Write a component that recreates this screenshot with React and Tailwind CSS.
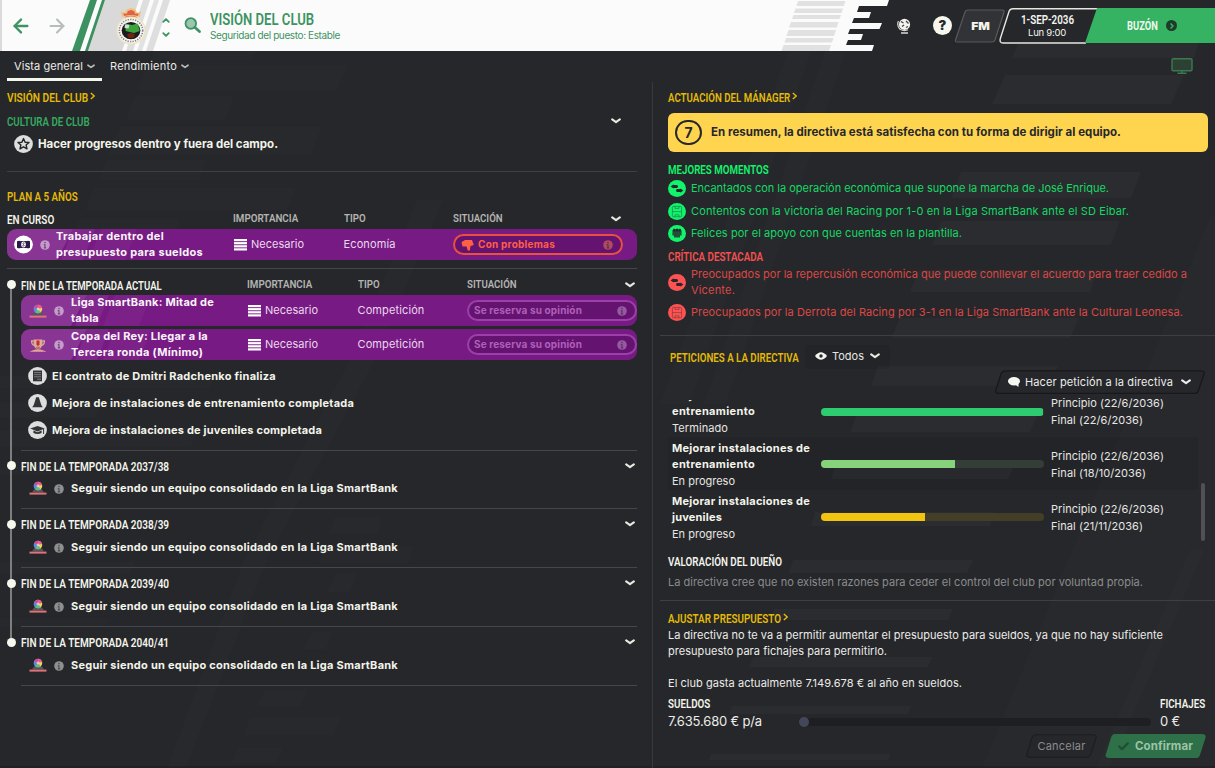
import React, { useLayoutEffect, useRef, useState } from "react";
import { ArrowLeft, ArrowRight, ChevronDown, ChevronRight, ChevronUp, Check } from "lucide-react";

/* Text set to a fixed measure: letter spacing absorbs the difference. */
function Fit({ w, className = "", children }) {
  const ref = useRef(null);
  const [ls, setLs] = useState(0);
  useLayoutEffect(() => {
    const natural = ref.current.getBoundingClientRect().width;
    setLs((w - natural) / String(children).length);
  }, [w, children]);
  return (
    <span ref={ref} className={"inline-block whitespace-pre " + className} style={{ letterSpacing: ls + "px" }}>
      {children}
    </span>
  );
}

/* Condensed display face: glyphs are narrowed to the given measure. */
function Cond({ w, className = "", children }) {
  const ref = useRef(null);
  const [s, setS] = useState(1);
  useLayoutEffect(() => {
    setS(w / ref.current.offsetWidth);
  }, [w, children]);
  return (
    <span className="flex shrink-0" style={{ width: w }}>
      <span
        ref={ref}
        className={"block shrink-0 origin-left whitespace-pre font-[Roboto,sans-serif] " + className}
        style={{ transform: "scaleX(" + s + ")" }}
      >
        {children}
      </span>
    </span>
  );
}

const H = "-translate-y-[0.5px] text-[13.5px] leading-4 font-semibold";

function Chev({ className = "", small }) {
  return (
    <svg viewBox="0 0 10 6" className={(small ? "h-[5px] w-[8px] shrink-0 " : "h-[6px] w-[10px] shrink-0 ") + className}>
      <path d="M1.200 1.400L5 4.100L8.800 1.400" fill="none" stroke="currentColor" strokeWidth="2.100" strokeLinecap="round" strokeLinejoin="round" />
    </svg>
  );
}

function Info({ className = "" }) {
  return (
    <svg viewBox="0 0 10 10" className={"h-[10px] w-[10px] shrink-0 " + className}>
      <circle cx="5" cy="5" r="4.800" fill="currentColor" />
      <path d="M5 4.300V8M3.800 4.600H5M3.800 7.800H6.200" stroke="#26272b" strokeOpacity=".6" strokeWidth="1.200" />
      <circle cx="5" cy="2.600" r=".8" fill="#26272b" fillOpacity=".6" />
    </svg>
  );
}

function Bars() {
  return (
    <svg viewBox="0 0 13 12" className="h-[12px] w-[13px] shrink-0">
      {[0, 3.1, 6.2, 9.3].map((y) => (
        <rect key={y} x="0" y={y} width="13" height="2.2" fill="#fff" />
      ))}
    </svg>
  );
}

function League() {
  return (
    <svg viewBox="0 0 18 16" className="h-[16px] w-[18px] shrink-0">
      <path d="M3 12.600Q6 7 9 9Q12 7 15 12.600Z" fill="#5a5658" />
      <circle cx="9" cy="6" r="4.200" fill="#b9a8b8" />
      <path d="M9 6V1.800A4.200 4.200 0 0 1 13 5Z" fill="#f0568e" />
      <path d="M9 6L13.100 5A4.200 4.200 0 0 1 11.500 9.400Z" fill="#f4d24c" />
      <path d="M9 6L11.500 9.400A4.200 4.200 0 0 1 6.300 9.200Z" fill="#5bbf7e" />
      <path d="M9 6L6.300 9.200A4.200 4.200 0 0 1 5.200 4.300Z" fill="#4e8ede" />
      <path d="M9 6L5.200 4.300A4.200 4.200 0 0 1 9 1.800Z" fill="#d0459a" />
      <circle cx="9" cy="6" r="1.400" fill="#e9e2ea" fillOpacity=".7" />
      <rect x="0.5" y="12.600" width="17" height="2" fill="#e2727a" />
    </svg>
  );
}

function Cup() {
  return (
    <svg viewBox="0 0 18 16" className="h-[16px] w-[18px] shrink-0">
      <path d="M4.500 2.500H13.500V7A4.500 4.500 0 0 1 4.500 7Z" fill="#dcae94" />
      <path d="M4.500 4H2.600Q2.600 8 5.600 8.400M13.500 4H15.400Q15.400 8 12.400 8.400" fill="none" stroke="#dcae94" strokeWidth="1.300" />
      <path d="M7.500 3.500H10.500V8Q9 9.400 7.500 8Z" fill="#c8273c" />
      <path d="M7.600 9.500H10.400L12 12.600H6Z" fill="#b07868" />
      <path d="M0.500 14.800Q9 9.800 17.500 14.800Z" fill="#e6a49c" />
    </svg>
  );
}

function Money() {
  return (
    <svg viewBox="0 0 19 19" className="h-[19px] w-[19px] shrink-0">
      <ellipse cx="9.500" cy="9.500" rx="9.400" ry="8.900" fill="#fff" />
      <path d="M3 6.200Q5 5.200 7 6.200V12.800Q5 13.800 3 12.800ZM16 6.200Q14 5.200 12 6.200V12.800Q14 13.800 16 12.800Z" fill="#2c1b46" />
      <path d="M6.500 5.900H12.500V13.100H6.500Z" fill="#2c1b46" />
      <ellipse cx="9.500" cy="9.500" rx="2.300" ry="2.900" fill="#fff" />
      <path d="M10.700 8.200Q9.700 7.400 9 8.200Q8.600 9.100 9.500 9.500Q10.500 9.900 10.100 10.700Q9.300 11.400 8.300 10.700" stroke="#2c1b46" strokeWidth=".8" fill="none" />
    </svg>
  );
}

function StarIcon() {
  return (
    <svg viewBox="0 0 19 18" className="h-[18px] w-[19px] shrink-0">
      <ellipse cx="9.500" cy="9" rx="9.400" ry="8.900" fill="#dededf" />
      <path d="M9.500 3.600L11.100 7.200L15 7.500L12.100 10L13 13.900L9.500 11.800L6 13.900L6.900 10L4 7.500L7.900 7.200Z" fill="none" stroke="#26272b" strokeWidth="1.400" strokeLinejoin="round" />
    </svg>
  );
}

function GreyIcon({ kind }) {
  return (
    <svg viewBox="0 0 19 18" className="-mt-px h-[18px] w-[19px] shrink-0">
      <ellipse cx="9.500" cy="9" rx="9.400" ry="8.900" fill="#dededf" />
      {kind === "doc" && (
        <g>
          <path d="M5 3.500H14V14.300H5Z" fill="#333438" />
          <path d="M6 5.600H13M6 7.700H13M6 9.800H13M9 12.200H13" stroke="#8f8f91" strokeWidth=".8" />
        </g>
      )}
      {kind === "cone" && (
        <g fill="#333438">
          <path d="M8.200 3.200H10.800L13.400 11.500H5.600Z" />
          <path d="M4.200 13.200L6 10.800H13L14.800 13.200Z" />
        </g>
      )}
      {kind === "cap" && (
        <g fill="#333438">
          <path d="M2.200 7.600L9.500 5L16.800 7.600L9.500 10.400Z" />
          <path d="M5.400 9.600V12Q9.500 14.200 13.600 12V9.600L9.500 11.200Z" />
          <path d="M15.600 8V13" stroke="#333438" strokeWidth="1" />
        </g>
      )}
    </svg>
  );
}

function NewsIcon({ kind, className }) {
  return (
    <svg viewBox="0 0 18 17" className={"h-[17px] w-[18px] shrink-0 " + className}>
      <ellipse cx="9" cy="8.500" rx="9" ry="8.500" fill="currentColor" />
      {kind === "swap" && (
        <g fill="#26272b">
          <path d="M2.600 6.400L5.600 4.300V5H8.800Q10 5.300 10 6.500Q10 7.800 8.800 8H5.600V8.600Z" />
          <path d="M15.400 10.600L12.400 12.700V12H9.200Q8 11.700 8 10.500Q8 9.200 9.200 9H12.400V8.400Z" />
        </g>
      )}
      {kind === "pitch" && (
        <g fill="none" stroke="#26272b" strokeOpacity=".42" strokeWidth=".9">
          <rect x="4.400" y="3.400" width="9.200" height="10.400" rx="1" />
          <path d="M4.400 8.600H13.600M7 3.400V5.400H11V3.400M7 13.800V11.800H11V13.800" />
        </g>
      )}
      {kind === "squad" && (
        <g fill="#26272b">
          <path d="M4.400 5.400H13.600V10.600H12V12.400H6V10.600H4.400Z" fillOpacity=".8" />
          <circle cx="6.300" cy="5.200" r="1.400" />
          <circle cx="9" cy="4.900" r="1.500" />
          <circle cx="11.700" cy="5.200" r="1.400" />
        </g>
      )}
    </svg>
  );
}

function Crest() {
  return (
    <svg viewBox="0 0 30 38" className="h-[38px] w-[30px]">
      <path d="M6 10L5 4.500L9 6L10.500 2.500L15 1L19.500 2.500L21 6L25 4.500L24 10Q15 7.500 6 10Z" fill="#efc27a" />
      <path d="M8 9L7.600 6L10.500 7L12 4L15 3L18 4L19.500 7L22.400 6L22 9Q15 7 8 9Z" fill="#e2604a" />
      <path d="M9 10.500Q15 8.500 21 10.500" stroke="#e07a3c" strokeWidth="1.400" fill="none" />
      <ellipse cx="15" cy="23.500" rx="14.600" ry="14" fill="#efe2bd" />
      <ellipse cx="15" cy="23.500" rx="13.400" ry="12.800" fill="#f8f6f2" />
      <ellipse cx="15" cy="23.500" rx="11.700" ry="11.100" fill="none" stroke="#85828a" strokeWidth="1.600" strokeDasharray="1.300 1.200" />
      <ellipse cx="15" cy="23.600" rx="9.400" ry="8.600" fill="#1c1a1a" />
      <path d="M9.500 16.500L16 18L21.500 16.400L23.800 24L18 26L9.600 24Z" fill="#3aa53c" />
      <path d="M9 17.500L13.500 18L12.500 21.500L8.500 21Z" fill="#d5ddd6" />
      <path d="M11 27.500Q15 24.500 19 27.500L18 30.500Q15 31.800 12 30.500Z" fill="#6e2215" />
    </svg>
  );
}

function Backdrop() {
  const right = [
    "1020,38 1200,38 1194,58 1012,58", "1005,75 1184,75 1171,104 992,104", "961,172 1141,172 1131,198 951,198",
    "941,221 1120,221 1111,245 932,245", "919,270 1098,270 1090,292 910,292", "900,318 1079,318 1070,338 891,338",
    "878,366 1058,366 1050,386 871,386", "857,414 1038,414 1030,432 850,432", "836,463 1016,463 1008,479 831,479",
    "815,512 994,512 990,526 811,526", "793,560 973,560 967,573 789,573", "774,609 953,609 948,620 770,620",
    "753,657 932,657 928,667 749,667", "732,706 911,706 908,714 729,714", "711,754 891,754 888,760 709,760",
  ];
  const left = [
    "155,51 258,51 249,60 151,60", "147,65 348,65 337,90 138,90", "135,96 234,96 225,120 126,120",
    "120,127 322,127 311,155 108,155", "107,160 206,160 199,180 99,180", "94,188 296,188 287,210 85,210",
    "80,219 180,219 172,240 70,240", "0,376 215,376 209,388 0,388", "0,403 101,403 96,417 0,417", "0,431 197,431 191,447 0,447",
    "0,467 78,467 73,475 0,475", "335,517 382,517 377,534 329,534", "325,546 413,546 408,563 318,563",
    "336,574 357,574 350,592 326,592", "312,632 333,632 326,649 303,649", "266,690 307,690 301,706 257,706",
    "250,718 341,718 334,735 243,735", "238,748 283,748 276,763 232,763", "0,562 135,562 130,574 0,574", "0,619 110,619 105,626 0,626",
  ];
  return (
    <svg viewBox="0 0 1215 768" className="absolute inset-0 h-[768px] w-[1215px]">
      <g fill="#fff" fillOpacity=".024">
        {right.map((p) => (
          <polygon key={p} points={p} />
        ))}
      </g>
      <g fill="#fff" fillOpacity=".012">
        {left.map((p) => (
          <polygon key={p} points={p} />
        ))}
        <polygon points="788,51 811,51 690,404 660,404" />
        <polygon points="825,51 846,51 726,404 704,404" />
        <polygon points="1211,215 1215,215 1215,768 982,768" />
        <polygon points="1190,550 1204,550 1110,768 1096,768" />
        <polygon points="417,200 443,200 375,360 267,560 186,768 167,768 244,560 350,360" />
      </g>
      <rect x="0" y="766" width="1215" height="2" fill="#18181b" fillOpacity=".35" />
    </svg>
  );
}

function HeaderArt() {
  return (
    <svg viewBox="0 0 900 51" className="absolute top-0 left-0 h-[51px] w-[900px]">
      <path d="M0 0H889L887 6H859L857 12H871L869 18H854L852 23H882L879.500 29H850L848 34H863L861 40H848L846 45H874L872 51H0Z" fill="#fbfbfb" />
      <rect x="0" y="0" width="2" height="51" fill="#dadada" />
      <polygon points="105,0 139,0 122,51 88,51" fill="#d9d9d9" />
      <polygon points="143,0 150,0 133,51 126,51" fill="#dedede" />
      <polygon points="154,0 159,0 142,51 137,51" fill="#e2e2e2" />
      <polygon points="163,0 170,0 153,51 146,51" fill="#dedede" />
      <polygon points="90,0 97,0 80,51 72,51" fill="#3d9160" />
      <polygon points="102,0 105,0 88,51 85,51" fill="#3d9160" />
      <g fill="#e1e1e1">
        <polygon points="798,1 845.500,1 843.800,6 796.500,6" />
        <polygon points="795.500,8.500 843,8.500 841.500,13 794,13" />
        <polygon points="793.500,15 841,15 839.500,19 792,19" />
        <polygon points="791,22 838.500,22 836.700,27.500 789,27.500" />
        <polygon points="788.500,30 836,30 834,36 786.500,36" />
        <polygon points="786,38 833.500,38 832,42.500 784.500,42.500" />
        <polygon points="783.500,45 831,45 829,51 781.500,51" />
      </g>
    </svg>
  );
}

function Header() {
  return (
    <header className="relative h-[51px] w-full shrink-0">
      <HeaderArt />
      <div className="relative flex h-full items-center">
        <ArrowLeft className="ml-[10px] h-[22px] w-[22px] text-[#3d9463]" strokeWidth={2.5} />
        <ArrowRight className="ml-[14px] h-[22px] w-[22px] text-[#b9bdb9]" strokeWidth={2.3} />
        <div className="ml-[48px] pt-px">
          <Crest />
        </div>
        <div className="ml-[13px] flex flex-col gap-[3px] pt-[3px] text-[#3d9463]">
          <ChevronUp className="h-[11px] w-[14px]" strokeWidth={4} />
          <ChevronDown className="h-[11px] w-[14px]" strokeWidth={4} />
        </div>
        <svg viewBox="0 0 18 17" className="ml-[11px] h-[17px] w-[18px]">
          <circle cx="6.800" cy="6.500" r="5.300" fill="#9cc5ae" stroke="#3d9463" strokeWidth="1.800" />
          <path d="M11 10.500L15.500 14.500" stroke="#3d9463" strokeWidth="2.800" strokeLinecap="round" />
        </svg>
        <div className="ml-[8px] flex flex-col text-[#3d9463]">
          <Cond w={104} className="text-[17px] leading-[18px] font-semibold">VISIÓN DEL CLUB</Cond>
          <Fit w={130} className="text-[10px] leading-[14px]">Seguridad del puesto: Estable</Fit>
        </div>
        <div className="ml-auto flex items-center">
          <svg viewBox="0 0 16 16" className="mr-[21px] h-[16px] w-[16px]">
            <circle cx="8.500" cy="6.400" r="5.600" fill="#f4f4ec" />
            <path d="M5 3.500L7.500 5M6 8.500L8 7M10 3L12.500 5.500M10 9.500L12 8.500" stroke="#44454a" strokeWidth="1.300" fill="none" />
            <path d="M2.400 3Q.500 8 4 11.200Q8 13.500 12 11.800" stroke="#d8d8d2" strokeWidth="1.200" fill="none" />
            <path d="M5 15H12" stroke="#f4f4ec" strokeWidth="1.300" />
          </svg>
          <div className="flex h-[19px] w-[19px] items-center justify-center rounded-full bg-[#f6f8ee] text-[13px] font-black text-[#26272b]">?</div>
          <div className="relative ml-[2px] flex h-[34px] w-[52px] items-center justify-center">
            <svg viewBox="0 0 52 34" className="absolute inset-0 h-[34px] w-[52px]">
              <path d="M14 1H48Q50.500 1 50 3L41 31Q40.200 33 38 33H3Q1 33 1.500 31L11 3Q11.800 1 14 1Z" fill="#323337" stroke="#58595d" strokeWidth="1.200" />
            </svg>
            <span className="relative scale-x-110 pt-px text-[11px] leading-4 font-black text-[#f4f4ec]">FM</span>
          </div>
          <div className="relative -ml-[7px] flex h-[36px] w-[216px]">
            <svg viewBox="0 0 216 36" className="absolute inset-0 h-[36px] w-[216px]">
              <path d="M98 .800H14Q11 .800 10 3.500L1.500 30Q0 35 4 35H87" fill="#26272b" stroke="#e6e6e0" strokeWidth="1.400" />
              <path d="M98 0H216V35H86Z" fill="#35b262" />
            </svg>
            <div className="relative flex w-[96px] flex-col items-center pt-[4px] text-[#f4f5ee]">
              <Cond w={53} className="text-[13.5px] leading-[15px] font-semibold">1-SEP-2036</Cond>
              <Fit w={38} className="text-[9.5px] leading-[12px]">Lun 9:00</Fit>
            </div>
            <div className="relative flex flex-1 items-center gap-[8px] pl-[32px] text-[#eef8ee]">
              <Cond w={31} className="text-[13px] leading-[16px] font-bold">BUZÓN</Cond>
              <div className="flex h-[11px] w-[11px] items-center justify-center rounded-full bg-[#1e3b2a] text-[#35b262]">
                <ChevronRight className="h-[8px] w-[8px]" strokeWidth={5} />
              </div>
            </div>
          </div>
        </div>
      </div>
    </header>
  );
}

function Tabs() {
  return (
    <nav className="flex h-[31px] shrink-0 items-start pl-[7px] text-[11px] text-[#ecece8]">
      <div className="flex h-[30px] w-[95px] items-center gap-[4px] border-b-[3px] border-[#f4f7ec] pl-[7px] pt-[3px]">
        <Fit w={69}>Vista general</Fit>
        <Chev small className="mt-px text-[#b9b9b7]" />
      </div>
      <div className="flex h-[30px] items-center gap-[4px] pl-[8px]">
        <Fit w={67}>Rendimiento</Fit>
        <Chev small className="mt-px text-[#b9b9b7]" />
      </div>
      <svg viewBox="0 0 22 18" className="mt-[6px] mr-[22px] ml-auto h-[18px] w-[22px]">
        <rect x="1" y="1.800" width="20" height="12" rx="1.200" fill="#2c4034" stroke="#3a7a50" strokeWidth="1.400" />
        <path d="M6.500 16.300H15.500M11 14V16" stroke="#3a7a50" strokeWidth="1.400" />
      </svg>
    </nav>
  );
}

function Heading({ w, children, arrow, className = "" }) {
  return (
    <div className={"flex items-center gap-[2px] text-[#e3bb07] " + className}>
      <Cond w={w} className={H}>{children}</Cond>
      {arrow && (
        <svg viewBox="0 0 6 9" className="-mt-[2px] h-[8px] w-[5px]">
          <path d="M1 1L5 4.500L1 8" fill="none" stroke="currentColor" strokeWidth="1.700" />
        </svg>
      )}
    </div>
  );
}

function PlanHeader({ title, w, cols }) {
  return (
    <div className="flex h-full items-center pr-[2px]">
      <Cond w={w} className={H + " text-[#f3f4ea]"}>{title}</Cond>
      {cols && (
        <div className="ml-auto flex text-[#b4b4b2]">
          <div className="w-[110.500px]"><Cond w={65} className="text-[11px] leading-4 font-semibold">IMPORTANCIA</Cond></div>
          <div className="w-[109.500px]"><Cond w={22} className="text-[11px] leading-4 font-semibold">TIPO</Cond></div>
          <div className="w-[158px]"><Cond w={50} className="text-[11px] leading-4 font-semibold">SITUACIÓN</Cond></div>
        </div>
      )}
      <Chev className={cols ? "text-[#e8e9df]" : "ml-auto text-[#e8e9df]"} />
    </div>
  );
}

function Goal({ icon, lines, type, typeW, status, bad }) {
  return (
    <div className="relative flex h-[31px] items-center overflow-hidden rounded-[9px] bg-[#781a84] text-white">
      <svg viewBox="0 0 200 31" className="absolute top-0 left-0 h-[31px] w-[200px]">
        <polygon points="0,0 66,0 50,31 0,31" fill="#fff" fillOpacity=".12" />
        <polygon points="66,0 88,0 76,31 54,31" fill="#fff" fillOpacity=".06" />
        <polygon points="94,0 130,0 118,31 82,31" fill="#fff" fillOpacity=".03" />
      </svg>
      <div className="relative ml-[7px] flex w-[19px] justify-center">{icon}</div>
      <Info className="relative ml-[7px] text-[#c79acd]" />
      <div
        className={
          "relative -mt-[2px] flex flex-col text-[11px] leading-4 font-bold text-[#fbf4fb] " +
          (bad ? "ml-[6px] w-[178px]" : "ml-[7px] w-[177px]")
        }
      >
        {lines.map(([t, w]) => (
          <Fit key={t} w={w} className="self-start">{t}</Fit>
        ))}
      </div>
      <div className="relative flex w-[109.500px] items-center gap-[4px] text-[11px] text-[#ead9ec]">
        <Bars />
        <Fit w={53}>Necesario</Fit>
      </div>
      <div className="relative w-[109.500px] text-[11px] text-[#ead9ec]">
        <Fit w={typeW}>{type}</Fit>
      </div>
      <div
        className={
          "relative flex h-[21px] w-[170px] shrink-0 items-center rounded-full border-2 bg-[#651370] text-[10px] font-bold " +
          (bad ? "border-[#e8503f] pl-[6px] text-[#ff5f45]" : "border-[#9a40a8] pl-[5px] text-[#b060bb]")
        }
      >
        {bad && (
          <svg viewBox="0 0 13 12" className="mr-[4px] h-[12px] w-[13px]">
            <path d="M.5 3L3.500 1.500V1H11L12.800 6L9.500 7L8.800 11.500H6.800L5.600 7.500H1.500Z" fill="currentColor" />
          </svg>
        )}
        <Fit w={bad ? 77 : 108}>{status}</Fit>
        <Info className={bad ? "mr-[8px] ml-auto text-[#b04a60]" : "mr-[8px] ml-auto text-[#9a58a4]"} />
      </div>
    </div>
  );
}

const SEASONS = ["2037/38", "2038/39", "2039/40", "2040/41"];
const DOTS = ["top-[11px]", "top-[192px]", "top-[251px]", "top-[310px]", "top-[369px]"];
const EVENTS = [
  ["doc", "El contrato de Dmitri Radchenko finaliza", 224],
  ["cone", "Mejora de instalaciones de entrenamiento completada", 302],
  ["cap", "Mejora de instalaciones de juveniles completada", 270],
];

function Timeline() {
  return (
    <div className="relative h-[418px] pl-[14px]">
      <div className="absolute top-[15px] left-[3px] h-[359px] w-[2px] bg-[#7d7e7e]" />
      {DOTS.map((d) => (
        <span key={d} className={"absolute left-0 h-[9px] w-[9px] rounded-full bg-[#f6f8ee] " + d} />
      ))}
      <div className="h-[31px] w-full">
        <PlanHeader title="FIN DE LA TEMPORADA ACTUAL" w={141} cols />
      </div>
      <div className="-mt-[5px] flex flex-col gap-[3px]">
        <Goal icon={<League />} lines={[["Liga SmartBank: Mitad de", 143], ["tabla", 28]]} type="Competición" typeW={67} status="Se reserva su opinión" />
        <Goal icon={<Cup />} lines={[["Copa del Rey: Llegar a la", 137], ["Tercera ronda (Mínimo)", 132]]} type="Competición" typeW={67} status="Se reserva su opinión" />
      </div>
      <div className="flex h-[91px] flex-col border-b border-[#46474a] pt-[3px] pl-[7px] text-[11px] font-bold text-[#f3f4ea]">
        {EVENTS.map(([k, t, w]) => (
          <div key={k} className="flex h-[27px] items-center gap-[5px]">
            <GreyIcon kind={k} />
            <Fit w={w}>{t}</Fit>
          </div>
        ))}
      </div>
      {SEASONS.map((s, i) => (
        <div key={s} className={(i === 0 ? "h-[58px]" : "h-[59px]") + " border-b border-[#46474a]"}>
          <div className={i === 0 ? "h-[28px] pt-px" : "h-[29px] pt-px"}>
            <PlanHeader title={"FIN DE LA TEMPORADA " + s} w={148} />
          </div>
          <div className="flex h-[18px] items-center pl-[8px] text-[11px] font-bold text-[#f3f4ea]">
            <League />
            <Info className="mt-px ml-[7px] text-[#8f8f8f]" />
            <Fit w={327} className="ml-[7px]">Seguir siendo un equipo consolidado en la Liga SmartBank</Fit>
          </div>
        </div>
      ))}
    </div>
  );
}

function LeftPane() {
  return (
    <section className="flex w-[652px] shrink-0 flex-col pr-[15px] pl-[7px]">
      <Heading w={81} arrow className="mt-[3px] h-[24px]">VISIÓN DEL CLUB</Heading>
      <div className="flex h-[24px] items-center justify-between pr-[16px] text-[#35aa60]">
        <Cond w={83} className={H}>CULTURA DE CLUB</Cond>
        <Chev className="text-[#e8e9df]" />
      </div>
      <div className="flex h-[39px] items-start gap-[5px] border-b border-[#3e3f42] pt-[2px] pl-[7px] text-[11.5px] font-bold text-[#f3f4ea]">
        <StarIcon />
        <Fit w={240} className="leading-[18px]">Hacer progresos dentro y fuera del campo.</Fit>
      </div>
      <Heading w={71} className="mt-[12px] h-[24px]">PLAN A 5 AÑOS</Heading>
      <div className="h-[21px] pr-[14px]">
        <PlanHeader title="EN CURSO" w={47} cols />
      </div>
      <div className="border-b border-[#46474a] pb-[8px]">
        <Goal icon={<Money />} lines={[["Trabajar dentro del", 108], ["presupuesto para sueldos", 147]]} type="Economía" typeW={52} status="Con problemas" bad />
      </div>
      <Timeline />
    </section>
  );
}

function News({ kind, lines, className, color }) {
  return (
    <div className={"flex items-center gap-[5px] " + className}>
      <NewsIcon kind={kind} className={color} />
      <div className="flex flex-col">
        {lines.map(([t, w]) => (
          <Fit key={t} w={w} className="self-start">{t}</Fit>
        ))}
      </div>
    </div>
  );
}

const REQUESTS = [
  { title: [["Mejorar instalaciones de", 138], ["entrenamiento", 83]], state: "Terminado", stateW: 56, end: ["Final (22/6/2036)", 92], pct: "w-[222px]", bar: "bg-[#2ecc71]", track: "bg-[#2f3d36]", row: "" },
  { title: [["Mejorar instalaciones de", 138], ["entrenamiento", 83]], state: "En progreso", stateW: 63, end: ["Final (18/10/2036)", 95], pct: "w-[134px]", bar: "bg-[#86d37c]", track: "bg-[#343e37]", row: "bg-black/[0.06]" },
  { title: [["Mejorar instalaciones de", 138], ["juveniles", 50]], state: "En progreso", stateW: 63, end: ["Final (21/11/2036)", 92], pct: "w-[104px]", bar: "bg-[#f1c40f]", track: "bg-[#443e28]", row: "" },
];

function Requests() {
  return (
    <div className="flex h-[147px] flex-col justify-end overflow-hidden pr-[17px] pb-[2px]">
      {REQUESTS.map((r, i) => (
        <div key={i} className={"flex h-[53px] shrink-0 items-center pl-[4px] text-[11px] text-[#e6e6e2] " + r.row}>
          <div className={"flex w-[149px] flex-col pt-[2px] leading-4 " + (i === 0 ? "[clip-path:inset(15px_0_0_0)]" : "")}>
            {r.title.map(([t, w]) => (
              <Fit key={t} w={w} className="self-start font-bold text-[#f3f4ea]">{t}</Fit>
            ))}
            <Fit w={r.stateW} className="mt-px self-start">{r.state}</Fit>
          </div>
          <div className={"h-[8px] w-[223px] overflow-hidden rounded-full " + r.track + (i === 0 ? " mt-[2px]" : "")}>
            <div className={"h-full " + r.bar + " " + r.pct} />
          </div>
          <div className="ml-[7px] flex flex-col pt-[2px] leading-[17px]">
            <Fit w={113} className="self-start">Principio (22/6/2036)</Fit>
            <Fit w={r.end[1]} className="self-start">{r.end[0]}</Fit>
          </div>
        </div>
      ))}
    </div>
  );
}

function RightPane() {
  return (
    <section className="relative flex flex-1 flex-col border-l border-[#38393c] text-[11px]">
      <div className="flex flex-col pr-[7px] pl-[15px]">
        <Heading w={122} arrow className="mt-[3px] h-[24px]">ACTUACIÓN DEL MÁNAGER</Heading>
        <div className="mt-[4px] flex h-[39px] items-center rounded-[6px] bg-[#ffd54f] pl-[7px] text-[#26272b]">
          <div className="flex h-[25px] w-[27px] items-center justify-center rounded-full border-2 border-[#26272b] text-[14px] font-bold">7</div>
          <Fit w={410} className="ml-[9px] text-[11.5px] font-bold">En resumen, la directiva está satisfecha con tu forma de dirigir al equipo.</Fit>
        </div>
        <div className="mt-[7px] h-[20px] pt-[2px] text-[#10f56c]"><Cond w={101} className={H}>MEJORES MOMENTOS</Cond></div>
        <div className="flex flex-col text-[#14d966]">
          <News kind="swap" color="text-[#10f56c]" className="h-[19px]" lines={[["Encantados con la operación económica que supone la marcha de José Enrique.", 418]]} />
          <News kind="pitch" color="text-[#10f56c]" className="h-[26px]" lines={[["Contentos con la victoria del Racing por 1-0 en la Liga SmartBank ante el SD Eibar.", 438]]} />
          <News kind="squad" color="text-[#10f56c]" className="h-[19px]" lines={[["Felices por el apoyo con que cuentas en la plantilla.", 271]]} />
        </div>
        <div className="mt-[4px] h-[18px] pt-px text-[#f5504f]"><Cond w={95} className={H}>CRÍTICA DESTACADA</Cond></div>
        <div className="flex flex-col text-[#dc4746]">
          <News kind="swap" color="text-[#ff5252]" className="h-[34px] leading-4" lines={[["Preocupados por la repercusión económica que puede conllevar el acuerdo para traer cedido a", 496], ["Vicente.", 44]]} />
          <News kind="pitch" color="text-[#ff5252]" className="h-[26px]" lines={[["Preocupados por la Derrota del Racing por 3-1 en la Liga SmartBank ante la Cultural Leonesa.", 492]]} />
        </div>
      </div>
      <div className="mt-[10px] ml-[7px] border-t border-[#3e3f42]" />
      <div className="flex flex-col pl-[15px]">
        <div className="flex h-[34px] items-center pt-[8px] pl-[2px]">
          <Heading w={129}>PETICIONES A LA DIRECTIVA</Heading>
          <div className="ml-[6px] flex h-[24px] items-center rounded-[4px] bg-black/[0.06] px-[10px] pb-[2px] text-[#e6e6e2]">
            <svg viewBox="0 0 12 8" className="mr-[5px] h-[8px] w-[12px]">
              <path d="M0 4Q6 -3.500 12 4Q6 11.500 0 4Z" fill="#f4f4ee" />
              <circle cx="6" cy="4" r="1.700" fill="#26272b" />
            </svg>
            <Fit w={32}>Todos</Fit>
            <Chev className="ml-[6px] text-[#e8e9df]" />
          </div>
        </div>
        <div className="relative ml-[327px] flex h-[24px] w-[210px] items-center text-[#ecece8]">
          <svg viewBox="0 0 210 24" className="absolute inset-0 h-[24px] w-[210px]">
            <path d="M10 .800H206Q210 .800 209 4L203.500 20.500Q202.500 23.300 200 23.300H4Q-.5 23.300 1 19.500L6 4Q7 .800 10 .800Z" fill="#26272b" stroke="#18181b" strokeWidth="1.300" />
          </svg>
          <svg viewBox="0 0 12 10" className="relative ml-[13px] h-[10px] w-[12px]">
            <ellipse cx="6" cy="4.300" rx="6" ry="4.200" fill="#f6f6f0" />
            <path d="M6.500 7L10.500 10L10.500 6Z" fill="#f6f6f0" />
          </svg>
          <Fit w={148} className="relative ml-[5px]">Hacer petición a la directiva</Fit>
          <Chev className="relative ml-[8px]" />
        </div>
        <div className="relative mt-[4px]">
          <Requests />
          <div className="absolute top-[85px] right-[10px] h-[58px] w-[4px] rounded-full bg-[#505155]" />
        </div>
        <div className="mt-[8px] h-[21px] text-[#f3f4ea]"><Cond w={114} className={H}>VALORACIÓN DEL DUEÑO</Cond></div>
        <div className="h-[26px] leading-4 text-[#8b8c8b]"><Fit w={475}>La directiva cree que no existen razones para ceder el control del club por voluntad propia.</Fit></div>
      </div>
      <div className="ml-[7px] border-t border-[#3e3f42]" />
      <div className="flex flex-col pr-[9px] pl-[15px] leading-4 text-[#ecece8]">
        <Heading w={113} arrow className="mt-[8px] h-[18px] pb-px">AJUSTAR PRESUPUESTO</Heading>
        <Fit w={495} className="self-start">La directiva no te va a permitir aumentar el presupuesto para sueldos, ya que no hay suficiente</Fit>
        <Fit w={219} className="self-start">presupuesto para fichajes para permitirlo.</Fit>
        <Fit w={294} className="mt-4 self-start">El club gasta actualmente 7.149.678 € al año en sueldos.</Fit>
        <div className="mt-[4px] flex items-end">
          <div className="flex w-[131px] flex-col items-start">
            <Cond w={42} className={H + " text-[#f3f4ea]"}>SUELDOS</Cond>
            <Fit w={94} className="mt-[2px] text-[13px]">7.635.680 € p/a</Fit>
          </div>
          <div className="mb-[3px] flex h-[8px] w-[352px] items-center rounded-full bg-[#1e1f22]">
            <div className="h-[10px] w-[10px] rounded-full bg-[#44465a]" />
          </div>
          <div className="ml-[9px] flex flex-col items-start">
            <Cond w={45} className={H + " text-[#f3f4ea]"}>FICHAJES</Cond>
            <Fit w={20} className="mt-[2px] text-[13px]">0 €</Fit>
          </div>
        </div>
        <div className="mt-[5px] flex justify-end gap-[8px]">
          <div className="relative flex h-[24px] w-[71px] items-center justify-center text-[#8b8c8b]">
            <svg viewBox="0 0 72 25" className="absolute inset-0 h-[24px] w-[71px]" preserveAspectRatio="none">
              <path d="M10 .800H68Q72 .800 71 4L65.500 21.500Q64.500 24.300 62 24.300H4Q-.5 24.300 1 20.500L6 4Q7 .800 10 .800Z" fill="#26272b" stroke="#1d1e21" strokeWidth="1.200" />
            </svg>
            <Fit w={48} className="relative text-[11px]">Cancelar</Fit>
          </div>
          <div className="relative flex h-[24px] w-[101px] items-center pl-[12px] text-[#9dc4a9]">
            <svg viewBox="0 0 102 25" className="absolute inset-0 h-[24px] w-[101px]" preserveAspectRatio="none">
              <path d="M10 0H98Q102.500 0 101.500 4L96 21.500Q95 25 92 25H4Q-.5 25 1 20.500L6 4Q7 0 10 0Z" fill="#2e7048" />
            </svg>
            <Check className="relative h-[13px] w-[13px] text-[#214d33]" strokeWidth={4} />
            <Fit w={58} className="relative ml-[5px] text-[11.5px] font-bold">Confirmar</Fit>
          </div>
        </div>
      </div>
    </section>
  );
}

export default function App() {
  return (
    <div className="relative h-[768px] w-[1215px] overflow-hidden bg-[#26272b] font-[Inter,sans-serif]">
      <Backdrop />
      <div className="relative flex h-full flex-col">
        <Header />
        <Tabs />
        <main className="flex min-h-0 flex-1">
          <LeftPane />
          <RightPane />
        </main>
      </div>
    </div>
  );
}
